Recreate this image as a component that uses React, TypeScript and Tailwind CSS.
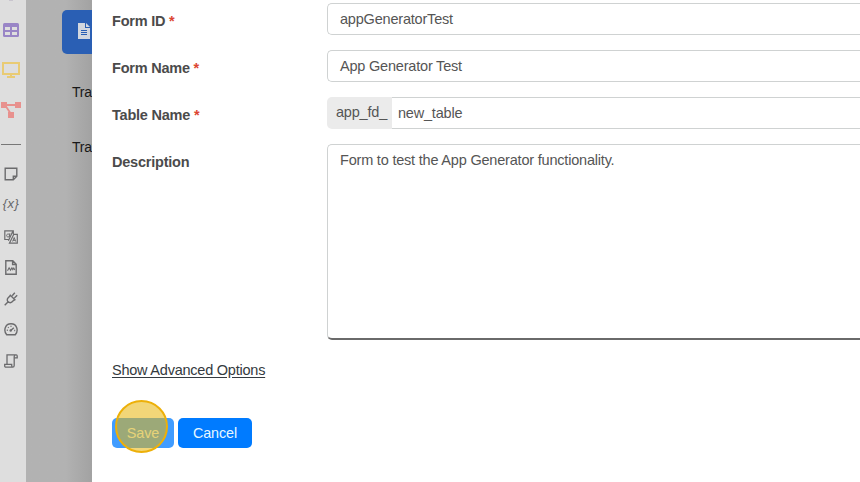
import type { ReactNode } from 'react';

function Row({ label, required, children }: { label: string; required?: boolean; children: ReactNode }) {
  return (
    <div className="flex items-start">
      <div className="w-[215px] shrink-0 pt-[9px] text-[14.5px] leading-[18px] font-bold tracking-[-0.22px] text-[#4b4b4b]">
        {label}
        {required && <span className="text-[#dc4632]"> *</span>}
      </div>
      {children}
    </div>
  );
}

function Field({ value }: { value: string }) {
  return (
    <div className="h-8 flex-1 rounded-l-[5px] border border-r-0 border-[#cfd2d2] pl-3 leading-[31px]">
      {value}
    </div>
  );
}

function Slot({ children }: { children: ReactNode }) {
  return <div className="flex h-[31px] w-[22px] items-center justify-center">{children}</div>;
}

const line = { fill: 'none', stroke: '#6b6b6d', strokeWidth: 1.4 } as const;

function Sidebar() {
  return (
    <aside className="flex w-[26px] shrink-0 flex-col bg-[#dedede]">
      <div className="flex h-[10px] w-[22px] justify-center">
        <div className="h-px w-1 bg-[#c9c5ce]" />
      </div>
      <div className="flex h-10 w-[22px] items-center justify-center">
        <svg width="16" height="14" viewBox="0 0 16 14">
          <rect width="16" height="14" rx="1.5" fill="#9985c6" />
          <path d="M2 4h5v3H2zM9 4h5v3H9zM2 9h5v3H2zM9 9h5v3H9z" fill="#dedede" />
        </svg>
      </div>
      <div className="flex h-10 w-[22px] items-center justify-center">
        <svg width="18" height="16" viewBox="0 0 18 16">
          <path d="M1 1h16v11H1zM9 12v3M5 15h8" fill="none" stroke="#e9cb74" strokeWidth="2" />
        </svg>
      </div>
      <div className="flex h-10 w-[22px] items-center justify-center">
        <svg width="20" height="16" viewBox="0 0 20 16">
          <path d="M3 3h14M4 3l6 9" stroke="#e8918e" strokeWidth="1.8" />
          <path d="M0 0h6v6H0zM14 0h6v6h-6zM7 10h6v6H7z" fill="#e8918e" />
        </svg>
      </div>
      <div className="mt-[14px] mb-[13px] ml-px h-px w-5 bg-[#777777]" />
      <Slot>
        <svg width="14" height="14" viewBox="0 0 14 14">
          <path d="M1.2 1.2h11.6v8l-3.5 3.6H1.2zM12.8 9.2H9.3v3.6" {...line} />
        </svg>
      </Slot>
      <div className="flex h-8 w-[22px] items-center justify-center pb-1 text-[13px] leading-none tracking-[0.4px] text-[#666668] italic">{'{x}'}</div>
      <Slot>
        <svg width="14" height="14" viewBox="0 0 14 14">
          <path d="M4.7 9.5H.8V.8h8.5v3.4M5.4 13.2l4.4-8.9h3.5v8.9zM8.6 1.8L4.4 10.8" {...line} strokeWidth="1.2" />
          <path d="M2.6 5.5c0-2 3-2 3 0s-3 2-3 0zM5.9 3.2L5.2 7M8.6 11.5l1.6-4 1.5 4M9 10.3h2.2" {...line} strokeWidth="1" />
        </svg>
      </Slot>
      <Slot>
        <svg width="12" height="15" viewBox="0 0 12 15">
          <path d="M.8.8h7l3.4 3.5v9.9H.8zM7.6.8v3.7h3.6" {...line} />
          <path d="M2.5 10.8l1.6-3 1.4 2.3 1.4-2.2.9 1.7 1-1.6 1 2" {...line} strokeWidth="1.1" />
        </svg>
      </Slot>
      <Slot>
        <svg width="14" height="14" viewBox="0 0 14 14">
          <path d="M.7 13.3l3.5-3.5M8.2 3.7l2.6-2.9M10.4 6l2.8-2.7M5.8 2.8l5.6 5.5M6.5 3.6L4.2 5.8c-1.3 1.4-1.2 2.9 0 4 1.2 1.2 2.8 1.2 4 0l2.3-2.3" {...line} />
        </svg>
      </Slot>
      <Slot>
        <svg width="14" height="13" viewBox="0 0 14 13">
          <path d="M2.7 11.8C-.8 7.6 1 .8 7 .8s7.8 6.8 4.3 11z" {...line} />
          <path d="M6.8 7.5l3-2.8M2.8 7.2h1M10.2 7.5h1M4 4.2l.7.6M7 2.8v1" {...line} />
          <circle cx="6.7" cy="7.5" r="1.2" fill="#6b6b6d" />
        </svg>
      </Slot>
      <Slot>
        <svg width="14" height="14" viewBox="0 0 14 14">
          <path d="M3 10V.8h9.2c1 0 1 .7 1 1.3v1.7h-3M12 .8c-1.4 0-1.8.7-1.8 1.8v8.9c0 1.1-.5 1.7-1.5 1.7H2c-.9 0-1.3-.5-1.3-1.2v-1.7h7v1.2c0 1 .3 1.7 1.1 1.7" {...line} strokeWidth="1.3" />
        </svg>
      </Slot>
    </aside>
  );
}

export default function App() {
  return (
    <div className="flex h-[482px] w-[860px] overflow-hidden bg-white font-['Liberation_Sans',Arial,sans-serif]">
      <Sidebar />
      <section className="flex w-[66px] shrink-0 flex-col overflow-hidden bg-linear-to-r from-[#b2b2b2] from-60% to-[#a2a2a2] pl-9">
        <div className="mt-[10px] flex h-11 w-16 shrink-0 items-center rounded-[5px] bg-[#2a5fb4] pb-[2px] pl-4">
          <svg width="12" height="16" viewBox="0 0 12 16" className="shrink-0">
            <path d="M0 0h7v5h5v11H0z" fill="#d2d7df" />
            <path d="M8 0l4 4H8z" fill="#d2d7df" />
            <path d="M3 7.5h6M3 9.5h6M3 11.5h6" stroke="#2a5fb4" />
          </svg>
        </div>
        <div className="mt-[29px] pl-[10px] text-[14px] leading-[18px] tracking-[-0.2px] text-[#181818]">Travel</div>
        <div className="mt-[37px] pl-[10px] text-[14px] leading-[18px] tracking-[-0.2px] text-[#181818]">Travel</div>
      </section>
      <main className="flex min-w-0 flex-1 flex-col bg-white pt-[3px] pl-5">
        <div className="flex flex-col gap-[15px] text-[14.5px] tracking-[-0.2px] text-[#555555]">
          <Row label="Form ID" required><Field value="appGeneratorTest" /></Row>
          <Row label="Form Name" required><Field value="App Generator Test" /></Row>
          <Row label="Table Name" required>
            <div className="flex h-8 flex-1">
              <div className="w-[65px] rounded-l-[5px] bg-[#ebebeb] pl-[9px] leading-[31px]">app_fd_</div>
              <div className="flex-1 border-y border-[#cfd2d2] pl-[6px] leading-[31px]">new_table</div>
            </div>
          </Row>
          <Row label="Description">
            <div className="h-[196px] flex-1 rounded-l-[5px] border border-r-0 border-b-2 border-[#cfd2d2] border-b-[#6a6a6a] pt-[6px] pl-3 leading-[18px]">
              Form to test the App Generator functionality.
            </div>
          </Row>
        </div>
        <div className="mt-[21px] text-[14.5px] leading-[18px] tracking-[-0.23px] text-[#343a40]">
          <span className="underline underline-offset-2">Show Advanced Options</span>
        </div>
        <div className="mt-[39px] flex gap-1 text-[14.4px] leading-[30px] tracking-[-0.1px] text-[#e6f7ff]">
          <div className="relative h-[30px] w-[62px] rounded-[5px] bg-[#409cff] text-center">
            Save
            <div className="absolute top-[-18px] left-[3px] size-[53px] rounded-full border-2 border-[#edb009] bg-[#e8b40a]/55" />
          </div>
          <div className="h-[30px] w-[74px] rounded-[5px] bg-[#007bff] text-center">Cancel</div>
        </div>
      </main>
    </div>
  );
}
